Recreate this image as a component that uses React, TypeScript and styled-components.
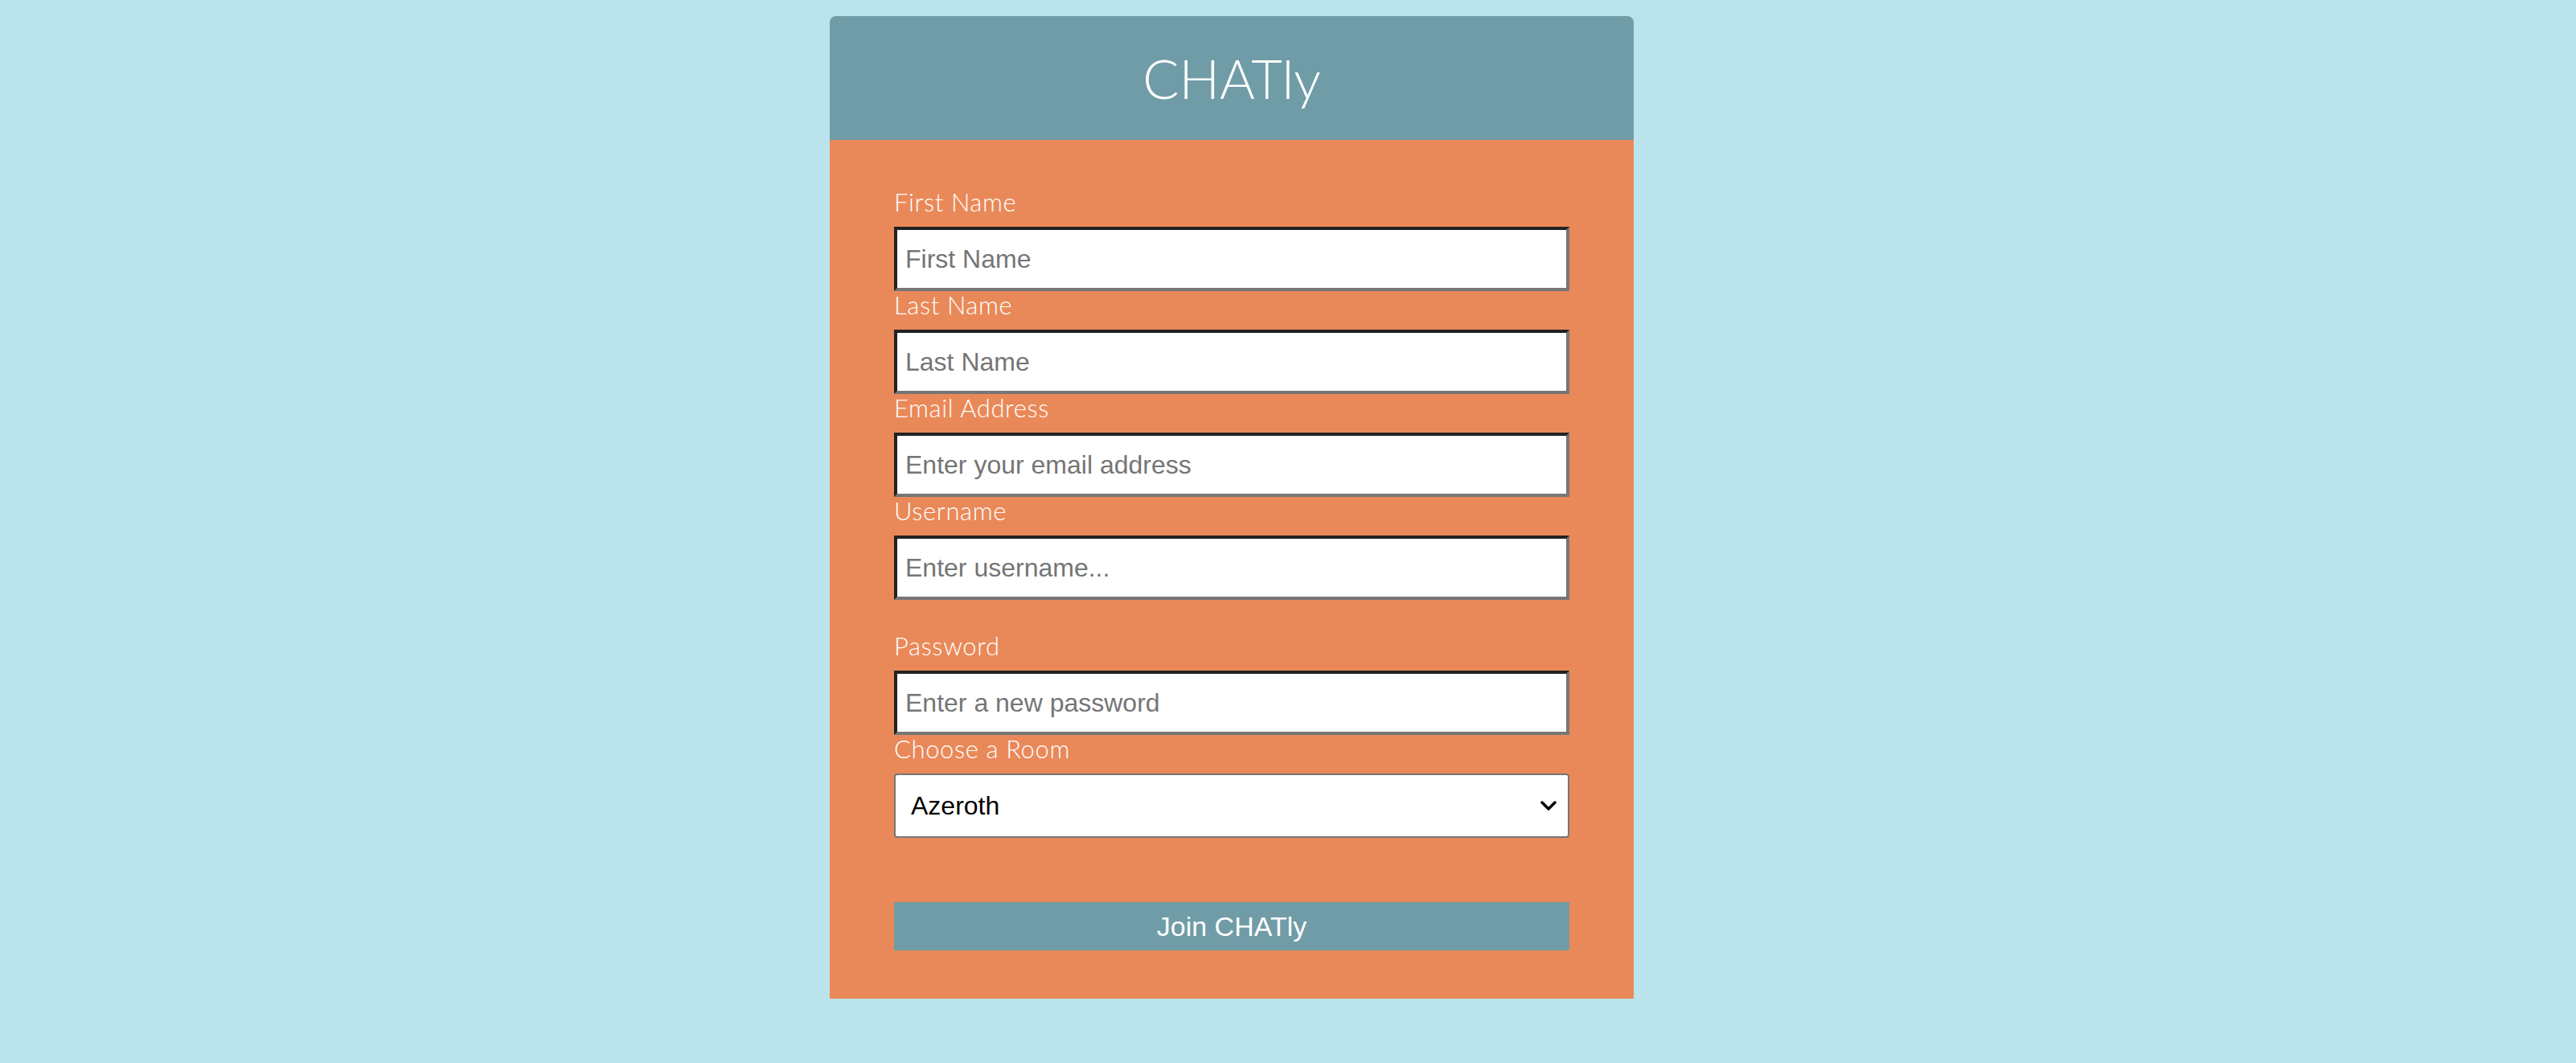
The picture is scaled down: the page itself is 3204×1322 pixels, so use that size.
import React from "react";
import styled, { createGlobalStyle } from "styled-components";

const Global = createGlobalStyle`
  html, body { margin: 0; padding: 0; }
  body {
    background: #bbe3ec;
    font-family: "Lato", "Open Sans", sans-serif;
    min-height: 1322px;
  }
  * { box-sizing: border-box; }
`;

const Page = styled.div`
  display: flex;
  justify-content: center;
  padding: 20px 140px 0 0;
`;

const Card = styled.div`
  width: 1000px;
  display: flex;
  flex-direction: column;
`;

const Header = styled.header`
  height: 154px;
  background: #709ca7;
  border-radius: 8px 8px 0 0;
  display: flex;
  align-items: center;
  justify-content: center;
`;

const Title = styled.h1`
  margin: 0;
  color: #ffffff;
  font-family: "Lato", sans-serif;
  font-weight: 300;
  font-size: 67px;
  line-height: 1;
`;

const Form = styled.form`
  background: #e98959;
  padding: 60px 80px 60px;
  display: flex;
  flex-direction: column;
`;

const Label = styled.label<{ $gapTop?: number }>`
  display: block;
  color: #ffffff;
  font-family: "Lato", "Open Sans", sans-serif;
  font-weight: 300;
  font-size: 31px;
  line-height: 34px;
  letter-spacing: 0.6px;
  margin-top: ${(p) => p.$gapTop ?? 0}px;
  margin-bottom: 14px;
`;

const Input = styled.input`
  width: 840px;
  height: 80px;
  border-style: solid;
  border-width: 4px;
  border-color: #222222 #767676 #767676 #222222;
  background: #ffffff;
  padding: 0 10px;
  font-family: "Liberation Sans", Arial, sans-serif;
  font-size: 32px;
  color: #000;
  outline: none;
  &::placeholder {
    color: #757575;
  }
`;

const SelectWrap = styled.div`
  position: relative;
  width: 840px;
  height: 80px;
`;

const Select = styled.select`
  appearance: none;
  -webkit-appearance: none;
  width: 100%;
  height: 100%;
  border: 2px solid #767676;
  border-radius: 4px;
  background: #ffffff;
  padding: 0 60px 0 19px;
  font-family: "Liberation Sans", Arial, sans-serif;
  font-size: 32px;
  color: #000000;
  outline: none;
`;

const Chevron = styled.svg`
  position: absolute;
  right: 16px;
  top: 34px;
  width: 20px;
  height: 12px;
  pointer-events: none;
`;

const Button = styled.button`
  margin-top: 80px;
  width: 840px;
  height: 60px;
  border: none;
  background: #709ca7;
  color: #ffffff;
  font-family: "Liberation Sans", Arial, sans-serif;
  font-size: 34px;
  cursor: pointer;
  padding: 0;
`;

const fields = [
  { id: "first", label: "First Name", placeholder: "First Name", type: "text", gap: 0 },
  { id: "last", label: "Last Name", placeholder: "Last Name", type: "text", gap: 0 },
  { id: "email", label: "Email Address", placeholder: "Enter your email address", type: "email", gap: 0 },
  { id: "user", label: "Username", placeholder: "Enter username...", type: "text", gap: 0 },
  { id: "pass", label: "Password", placeholder: "Enter a new password", type: "password", gap: 40 },
];

export default function App() {
  return (
    <>
      <Global />
      <Page>
        <Card>
          <Header>
            <Title>CHATly</Title>
          </Header>
          <Form onSubmit={(e) => e.preventDefault()}>
            {fields.map((f) => (
              <React.Fragment key={f.id}>
                <Label htmlFor={f.id} $gapTop={f.gap}>
                  {f.label}
                </Label>
                <Input id={f.id} type={f.type} placeholder={f.placeholder} />
              </React.Fragment>
            ))}
            <Label htmlFor="room">Choose a Room</Label>
            <SelectWrap>
              <Select id="room" defaultValue="Azeroth">
                <option>Azeroth</option>
                <option>Outland</option>
                <option>Northrend</option>
              </Select>
              <Chevron viewBox="0 0 20 12">
                <path d="M2 2 L10 10 L18 2" fill="none" stroke="#000" strokeWidth="3.5" strokeLinecap="round" strokeLinejoin="round" />
              </Chevron>
            </SelectWrap>
            <Button type="submit">Join CHATly</Button>
          </Form>
        </Card>
      </Page>
    </>
  );
}
